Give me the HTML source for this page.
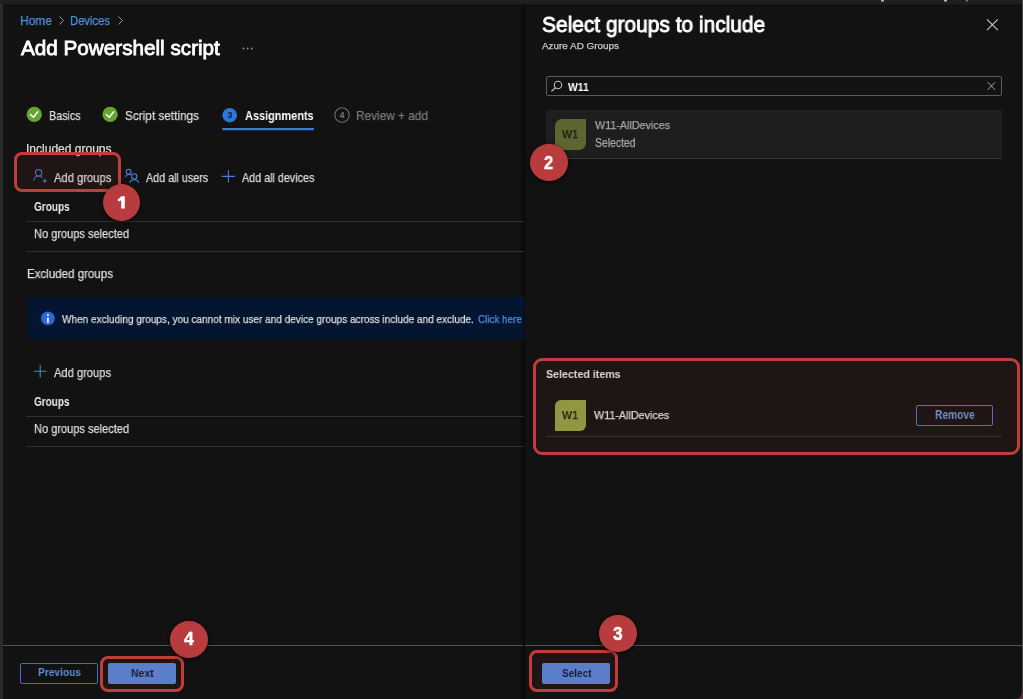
<!DOCTYPE html>
<html><head><meta charset="utf-8">
<style>
html,body{margin:0;padding:0;}
body{width:1023px;height:699px;overflow:hidden;position:relative;background:#121212;font-family:"Liberation Sans",sans-serif;}
.a{position:absolute;}
.t{position:absolute;white-space:nowrap;transform-origin:0 0;font-family:"Liberation Sans",sans-serif;will-change:transform;}

.rb{position:absolute;box-sizing:border-box;border:3px solid #c23c3d;background:rgba(83,33,33,0.2);}
.badge{position:absolute;border-radius:50%;background:#b83c3e;box-shadow:0 1px 4px rgba(0,0,0,0.7);}
.hl{position:absolute;height:1px;background:#2f2f2f;}
</style></head><body>
<!-- chrome -->
<div class="a" style="left:0;top:0;width:1023px;height:4px;background:#1f1f1f"></div>
<div class="a" style="left:0;top:4px;width:1023px;height:1px;background:#171717"></div>
<div class="a" style="left:0;top:4px;width:3px;height:695px;background:#2b2a27"></div>
<div class="a" style="left:1022px;top:0;width:1px;height:699px;background:#454545"></div>
<div class="a" style="left:523px;top:4px;width:2px;height:695px;background:#0b0b0b"></div>
<div class="a" style="left:518px;top:4px;width:5px;height:695px;background:linear-gradient(to right,rgba(0,0,0,0),rgba(0,0,0,0.25))"></div>

<!-- breadcrumb chevrons + dots -->
<svg class="a" style="left:0;top:0" width="300" height="70">
 <polyline points="59.5,16.5 63.5,20.5 59.5,24.5" fill="none" stroke="#9a9a9a" stroke-width="1"/>
 <polyline points="118.5,16.5 122.5,20.5 118.5,24.5" fill="none" stroke="#9a9a9a" stroke-width="1"/>
 <circle cx="243.5" cy="48.5" r="0.9" fill="#9a9a9a"/>
 <circle cx="247.7" cy="48.5" r="0.9" fill="#9a9a9a"/>
 <circle cx="251.9" cy="48.5" r="0.9" fill="#9a9a9a"/>
</svg>

<!-- tabs -->
<svg class="a" style="left:0;top:100px;will-change:transform" width="400" height="40">
 <circle cx="34.25" cy="14.4" r="7.7" fill="#66a532"/>
 <polyline points="30.5,14.5 33.4,17.3 37.8,11.8" fill="none" stroke="#fff" stroke-width="1.5" stroke-linecap="round" stroke-linejoin="round"/>
 <circle cx="110.1" cy="14.4" r="7.7" fill="#66a532"/>
 <polyline points="106.35,14.5 109.25,17.3 113.65,11.8" fill="none" stroke="#fff" stroke-width="1.5" stroke-linecap="round" stroke-linejoin="round"/>
 <circle cx="229.7" cy="15.2" r="7.3" fill="#2f77d6"/>
 <text x="229.8" y="18.4" font-family="Liberation Sans" font-size="8.6" font-weight="700" fill="#0c1a33" text-anchor="middle">3</text>
 <circle cx="342" cy="15" r="7.2" fill="none" stroke="#6e6e6e" stroke-width="1.1"/>
 <text x="342" y="18.2" font-family="Liberation Sans" font-size="8.4" font-weight="700" fill="#7a7a7a" text-anchor="middle">4</text>
 <rect x="222.4" y="28" width="91.5" height="2.2" fill="#3a7bd8"/>
</svg>

<!-- red box 1 -->

<!-- included icons -->
<svg class="a" style="left:0;top:160px" width="340" height="30">
 <!-- person add -->
 <circle cx="38.6" cy="12.8" r="3.2" fill="none" stroke="#4e7fd6" stroke-width="1.1"/>
 <path d="M33.5,20.6 C34.4,17.6 36.4,16 38.6,16 C40.3,16 41.7,16.8 42.7,18" fill="none" stroke="#4e7fd6" stroke-width="1.1"/>
 <path d="M42.9,20.8 H46.7 M44.8,18.9 V22.7" stroke="#4e7fd6" stroke-width="1.3"/>
 <!-- users -->
 <circle cx="128.6" cy="11.7" r="2.4" fill="none" stroke="#4e7fd6" stroke-width="1.1"/>
 <path d="M125.3,16.9 C126,15.3 127.2,14.5 128.7,14.5 C129.5,14.5 130.2,14.7 130.8,15.1" fill="none" stroke="#4e7fd6" stroke-width="1.1"/>
 <circle cx="134.2" cy="16.4" r="2.65" fill="none" stroke="#4e7fd6" stroke-width="1.1"/>
 <path d="M129.7,22.8 C130.3,20.9 132.1,19.8 134.2,19.8 C136.3,19.8 138.1,20.9 138.7,22.8" fill="none" stroke="#4e7fd6" stroke-width="1.1"/>
 <!-- plus -->
 <path d="M228.4,10.3 V22.6 M221.8,16.4 H235.1" stroke="#4e7fd6" stroke-width="1.1"/>
</svg>

<div class="hl" style="left:26px;top:221px;width:498px"></div>
<div class="hl" style="left:26px;top:251px;width:498px"></div>

<!-- info bar -->
<div class="a" style="left:27px;top:297px;width:497px;height:42px;background:#031530"></div>
<svg class="a" style="left:0;top:300px" width="80" height="40">
 <circle cx="47.9" cy="18.3" r="6.9" fill="#2e68d8"/>
 <rect x="47.1" y="17.6" width="1.7" height="5.2" fill="#fff"/>
 <circle cx="47.95" cy="15.1" r="1" fill="#fff"/>
</svg>

<svg class="a" style="left:0;top:360px" width="80" height="24">
 <path d="M40.2,4.7 V17.6 M33.9,11.2 H46.5" stroke="#4e7fd6" stroke-width="1.1"/>
</svg>
<div class="hl" style="left:26px;top:416px;width:498px"></div>
<div class="hl" style="left:26px;top:446px;width:498px"></div>

<!-- footer -->
<div class="a" style="left:3px;top:645px;width:520px;height:1px;background:#525252"></div>
<div class="a" style="left:525px;top:645px;width:497px;height:1px;background:#525252"></div>
<div class="a" style="left:20px;top:663px;width:78px;height:21px;box-sizing:border-box;border:1px solid #3f6fc6;border-radius:2px"></div>

<!-- right panel -->
<svg class="a" style="left:940px;top:0" width="83" height="110">
 <path d="M47,19.3 L57.8,30.2 M57.8,19.3 L47,30.2" stroke="#c8c8c8" stroke-width="1.1"/>
 <path d="M47.7,82.2 L55.1,89.9 M55.1,82.2 L47.7,89.9" stroke="#a8a8a8" stroke-width="1"/>
 <rect x="942" y="0" width="2" height="1.3" fill="#888"/>
</svg>
<svg class="a" style="left:860px;top:0" width="120" height="4">
 <rect x="21" y="0" width="3" height="1.5" fill="#bbb"/>
 <rect x="84" y="0" width="3" height="1.5" fill="#bbb"/>
 <rect x="106" y="0" width="1.5" height="1.5" fill="#999"/>
</svg>
<div class="a" style="left:546px;top:76px;width:456px;height:20px;box-sizing:border-box;border:1px solid #5a5a5a;border-radius:2px"></div>
<svg class="a" style="left:540px;top:70px" width="30" height="30">
 <circle cx="18" cy="15" r="3.7" fill="none" stroke="#c0c0c0" stroke-width="1.1"/>
 <path d="M15.4,17.7 L11.5,21.3" stroke="#c0c0c0" stroke-width="1.2"/>
</svg>

<div class="a" style="left:546px;top:110px;width:456px;height:48px;background:#1e1e1e;border-bottom:1.5px solid #343434"></div>
<div class="a" style="left:555px;top:119px;width:31px;height:31px;background:#5b6631;border-radius:7px 0 7px 0"></div>

<!-- selected items -->
<div class="a" style="left:555px;top:400px;width:31px;height:31px;background:#a2b24a;border-radius:6px 0 6px 0"></div>
<div class="a" style="left:546px;top:436px;width:456px;height:1px;background:#3a3030"></div>
<div class="a" style="left:916px;top:405px;width:77px;height:21px;box-sizing:border-box;border:1px solid #5a80d6;border-radius:2px"></div>


<svg class="a" style="left:1008px;top:684px" width="15" height="15"><path d="M15,6 L15,15 L7,15 Q14,15 14,7 Z" fill="#553540"/></svg>
<div class="t" style="left:19.50px;top:14.06px;font-size:13px;line-height:13px;font-weight:400;color:#5090e2;-webkit-text-stroke:0.25px #5090e2;transform:scaleX(0.9200)">Home</div>
<div class="t" style="left:69.84px;top:14.06px;font-size:13px;line-height:13px;font-weight:400;color:#5090e2;-webkit-text-stroke:0.25px #5090e2;transform:scaleX(0.8633)">Devices</div>
<div class="t" style="left:20.71px;top:38.05px;font-size:20.5px;line-height:20.5px;font-weight:400;color:#ffffff;-webkit-text-stroke:0.82px #ffffff;transform:scaleX(1.0089)">Add Powershell script</div>
<div class="t" style="left:48.96px;top:110.01px;font-size:12.7px;line-height:12.7px;font-weight:400;color:#dedede;-webkit-text-stroke:0.25px #dedede;transform:scaleX(0.8463)">Basics</div>
<div class="t" style="left:125.42px;top:110.01px;font-size:12.7px;line-height:12.7px;font-weight:400;color:#dedede;-webkit-text-stroke:0.25px #dedede;transform:scaleX(0.9285)">Script settings</div>
<div class="t" style="left:245.30px;top:109.95px;font-size:12.7px;line-height:12.7px;font-weight:700;color:#ffffff;transform:scaleX(0.8617)">Assignments</div>
<div class="t" style="left:356.48px;top:110.01px;font-size:12.7px;line-height:12.7px;font-weight:400;color:#7a7a7a;-webkit-text-stroke:0.25px #7a7a7a;transform:scaleX(0.9317)">Review + add</div>
<div class="t" style="left:26.12px;top:143.30px;font-size:12px;line-height:12px;font-weight:400;color:#dedede;-webkit-text-stroke:0.25px #dedede;transform:scaleX(1.0018)">Included groups</div>
<div class="t" style="left:53.72px;top:171.80px;font-size:12px;line-height:12px;font-weight:400;color:#f4f4f4;-webkit-text-stroke:0.25px #f4f4f4;transform:scaleX(0.9330)">Add groups</div>
<div class="t" style="left:145.51px;top:171.80px;font-size:12px;line-height:12px;font-weight:400;color:#dedede;-webkit-text-stroke:0.25px #dedede;transform:scaleX(0.8963)">Add all users</div>
<div class="t" style="left:242.01px;top:171.80px;font-size:12px;line-height:12px;font-weight:400;color:#dedede;-webkit-text-stroke:0.25px #dedede;transform:scaleX(0.8967)">Add all devices</div>
<div class="t" style="left:33.50px;top:200.94px;font-size:12px;line-height:12px;font-weight:700;color:#eeeeee;transform:scaleX(0.8373)">Groups</div>
<div class="t" style="left:33.61px;top:228.00px;font-size:12px;line-height:12px;font-weight:400;color:#dedede;-webkit-text-stroke:0.25px #dedede;transform:scaleX(0.9197)">No groups selected</div>
<div class="t" style="left:27.22px;top:267.90px;font-size:12px;line-height:12px;font-weight:400;color:#dedede;-webkit-text-stroke:0.25px #dedede;transform:scaleX(0.9616)">Excluded groups</div>
<div class="t" style="left:61.61px;top:313.68px;font-size:11.2px;line-height:11.2px;font-weight:400;color:#dedede;-webkit-text-stroke:0.25px #dedede;transform:scaleX(0.8974)">When excluding groups, you cannot mix user and device groups across include and exclude.</div>
<div class="t" style="left:478.31px;top:313.68px;font-size:11.2px;line-height:11.2px;font-weight:400;color:#5090e2;-webkit-text-stroke:0.25px #5090e2;transform:scaleX(0.8801)">Click here</div>
<div class="t" style="left:54.02px;top:366.60px;font-size:12px;line-height:12px;font-weight:400;color:#dedede;-webkit-text-stroke:0.25px #dedede;transform:scaleX(0.9282)">Add groups</div>
<div class="t" style="left:33.60px;top:396.14px;font-size:12px;line-height:12px;font-weight:700;color:#eeeeee;transform:scaleX(0.8303)">Groups</div>
<div class="t" style="left:33.61px;top:423.40px;font-size:12px;line-height:12px;font-weight:400;color:#dedede;-webkit-text-stroke:0.25px #dedede;transform:scaleX(0.9197)">No groups selected</div>
<div class="t" style="left:37.80px;top:667.47px;font-size:11.5px;line-height:11.5px;font-weight:700;color:#5b8ee0;transform:scaleX(0.8842)">Previous</div>
<div class="t" style="left:542.07px;top:13.70px;font-size:22px;line-height:22px;font-weight:400;color:#ffffff;-webkit-text-stroke:0.88px #ffffff;transform:scaleX(0.9507)">Select groups to include</div>
<div class="t" style="left:542.13px;top:40.65px;font-size:9.7px;line-height:9.7px;font-weight:400;color:#c8c8c8;-webkit-text-stroke:0.25px #c8c8c8;transform:scaleX(1.0207)">Azure AD Groups</div>
<div class="t" style="left:567.60px;top:80.80px;font-size:11.7px;line-height:11.7px;font-weight:700;color:#ffffff;transform:scaleX(0.8834)">W11</div>
<div class="t" style="left:594.62px;top:118.64px;font-size:11.6px;line-height:11.6px;font-weight:400;color:#a8a8a8;-webkit-text-stroke:0.25px #a8a8a8;transform:scaleX(0.9274)">W11-AllDevices</div>
<div class="t" style="left:594.61px;top:137.40px;font-size:12px;line-height:12px;font-weight:400;color:#a8a8a8;-webkit-text-stroke:0.25px #a8a8a8;transform:scaleX(0.8687)">Selected</div>
<div class="t" style="left:546.20px;top:368.40px;font-size:11.7px;line-height:11.7px;font-weight:700;color:#ffffff;transform:scaleX(0.9119)">Selected items</div>
<div class="t" style="left:594.32px;top:409.44px;font-size:11.6px;line-height:11.6px;font-weight:400;color:#ffffff;-webkit-text-stroke:0.25px #ffffff;transform:scaleX(0.9274)">W11-AllDevices</div>
<div class="t" style="left:934.60px;top:408.74px;font-size:12px;line-height:12px;font-weight:700;color:#78a0f0;transform:scaleX(0.8529)">Remove</div>
<div class="t" style="left:562.01px;top:129.07px;font-size:11.8px;line-height:11.8px;font-weight:400;color:#14170a;-webkit-text-stroke:0.25px #14170a;transform:scaleX(0.9031)">W1</div>
<div class="t" style="left:562.11px;top:410.17px;font-size:11.8px;line-height:11.8px;font-weight:400;color:#0e1005;-webkit-text-stroke:0.25px #0e1005;transform:scaleX(0.9031)">W1</div>
<!-- red boxes -->
<div class="rb" style="left:14px;top:152px;width:107px;height:40px;border-radius:8px"></div>
<div class="rb" style="left:99.5px;top:656px;width:84px;height:36px;border-radius:8px"></div>
<div class="rb" style="left:533px;top:357.5px;width:487px;height:97px;border-radius:9px"></div>
<div class="rb" style="left:529px;top:649.5px;width:88.5px;height:42px;border-radius:8px"></div>
<div class="a" style="left:108px;top:663px;width:68px;height:21px;background:#5a7ec9;border-radius:2px"></div>
<div class="a" style="left:542px;top:663px;width:68px;height:21px;background:#5a7ec9;border-radius:2px"></div>
<div class="t" style="left:130.80px;top:667.57px;font-size:11.5px;line-height:11.5px;font-weight:700;color:#1b1e2e;transform:scaleX(0.9125)">Next</div>
<div class="t" style="left:561.50px;top:667.67px;font-size:11.5px;line-height:11.5px;font-weight:700;color:#1b1e2e;transform:scaleX(0.8692)">Select</div>
<!-- badges -->
<div class="badge" style="left:102.9px;top:184px;width:37.4px;height:37.4px"></div>
<div class="badge" style="left:530px;top:143.7px;width:37.8px;height:37.8px"></div>
<div class="badge" style="left:599.2px;top:614.6px;width:37.6px;height:37.6px"></div>
<div class="badge" style="left:170.2px;top:620.7px;width:37.6px;height:37.6px"></div>
<div class="t" style="left:544.19px;top:154.89px;font-size:17.5px;line-height:17.5px;font-weight:700;color:#ffffff;-webkit-text-stroke:0.4px #ffffff;transform:scaleX(0.9423)">2</div>
<div class="t" style="left:613.20px;top:626.09px;font-size:17.5px;line-height:17.5px;font-weight:700;color:#ffffff;-webkit-text-stroke:0.4px #ffffff;transform:scaleX(0.9808)">3</div>
<div class="t" style="left:183.80px;top:631.29px;font-size:17.5px;line-height:17.5px;font-weight:700;color:#ffffff;-webkit-text-stroke:0.4px #ffffff;transform:scaleX(1.0096)">4</div>
<svg class="a" style="left:100px;top:180px" width="40" height="40"><path d="M21.1,16.3 H24.8 V28.6 H21.2 V20.3 Q19.7,21.3 17.9,21.5 V18.8 Q20.4,18.4 21.1,16.3 Z" fill="#fff"/></svg>

</body></html>
